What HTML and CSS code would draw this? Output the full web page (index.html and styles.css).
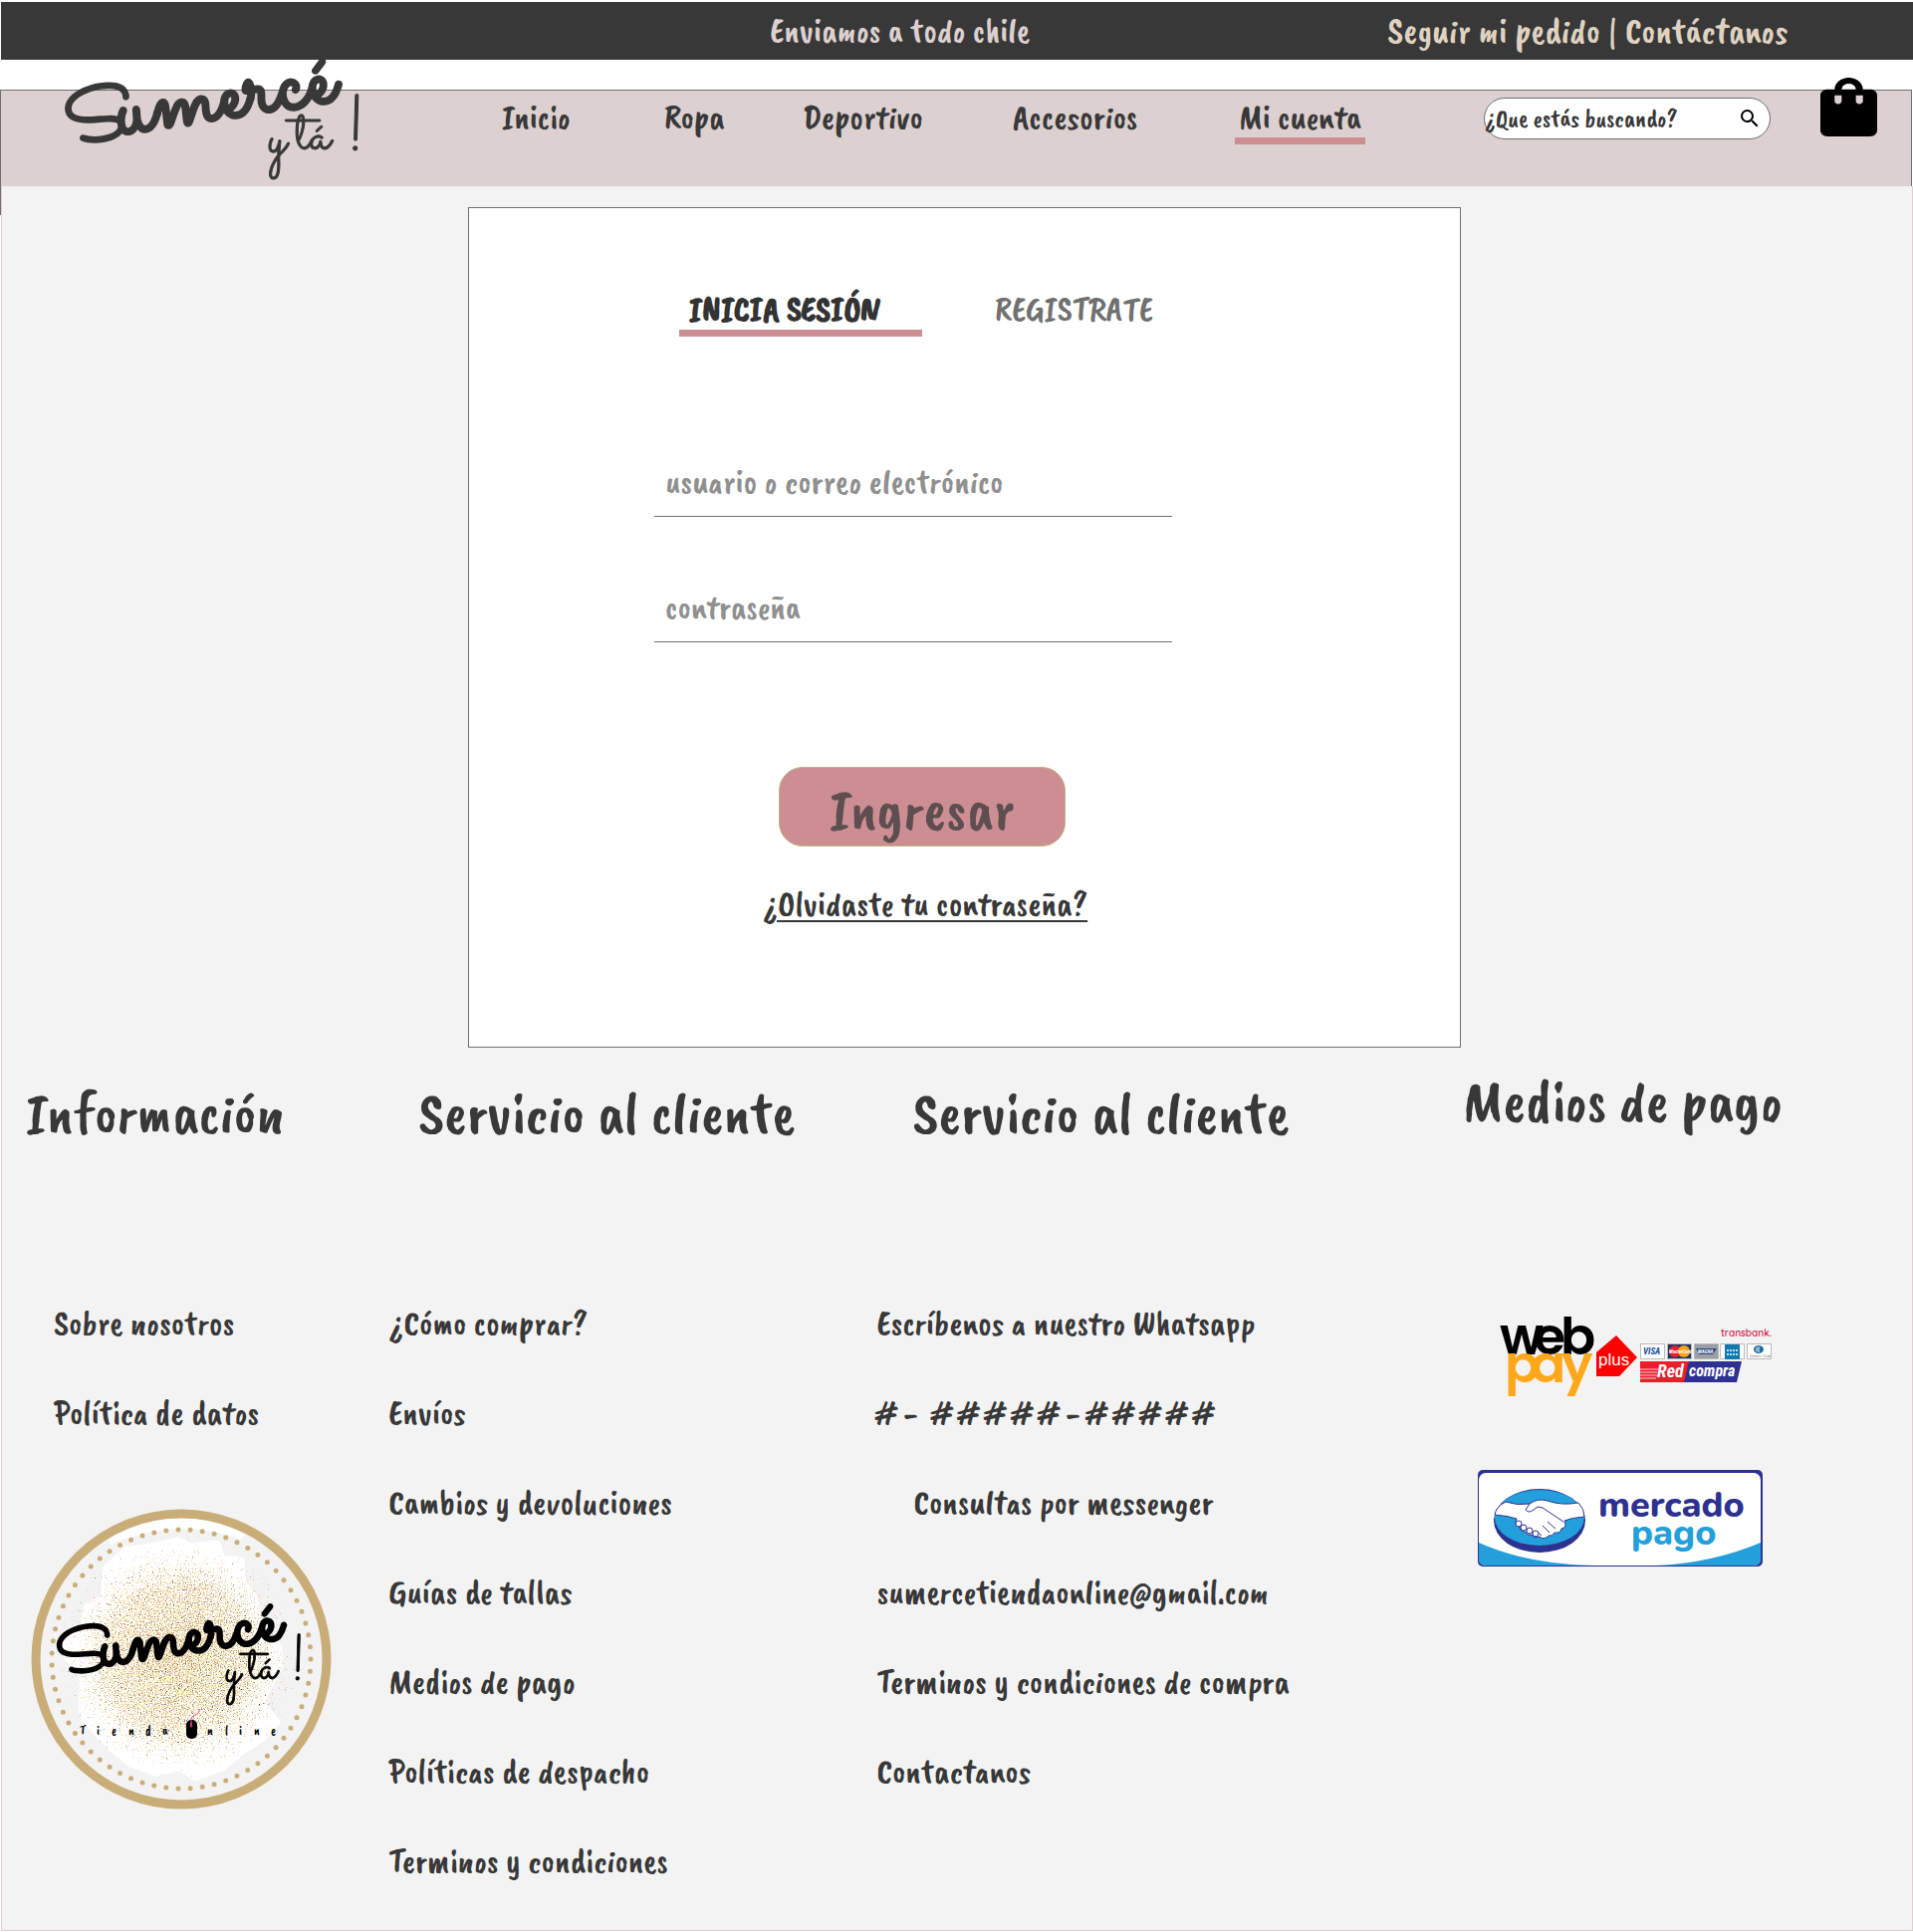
FILE: index.html
```html
<!DOCTYPE html>
<html lang="es">
<head>
<meta charset="utf-8">
<meta name="viewport" content="width=device-width, initial-scale=1">
<title>Sumercé y tá – Mi cuenta</title>
<link rel="stylesheet" href="styles.css">
</head>
<body>
<svg class="defs" aria-hidden="true">
  <symbol id="wordmark" viewBox="0 0 300 124">
    <g transform="rotate(-9 6 84)">
      <text class="script script-bold" x="6" y="84" font-size="74">S</text>
      <text class="script script-bold" x="58" y="82" font-size="106">umercé</text>
    </g>
    <text class="script" x="206" y="92" font-size="60">y</text>
    <text class="script" x="234" y="88" font-size="60">tá</text>
    <text class="script" x="284" y="89" font-size="78">!</text>
  </symbol>
</svg>

<div class="topbar">
  <p class="topbar-note">Enviamos a todo chile</p>
  <p class="topbar-links"><a href="#pedido">Seguir mi pedido</a> | <a href="#contacto">Contáctanos</a></p>
</div>

<header class="header">
  <a class="brand" href="#inicio" aria-label="Sumercé y tá"><svg width="300" height="124"><use href="#wordmark" width="300" height="124"/></svg></a>
  <nav class="nav">
    <a href="#inicio">Inicio</a>
    <a href="#ropa">Ropa</a>
    <a href="#deportivo">Deportivo</a>
    <a href="#accesorios">Accesorios</a>
    <a class="active" href="#cuenta">Mi cuenta</a>
  </nav>
  <form class="search">
    <input type="search" placeholder="¿Que estás buscando?" aria-label="Buscar">
    <button type="button" aria-label="Buscar"><svg width="24" height="24" viewBox="0 0 24 24"><path d="M15.5 14h-.79l-.28-.27A6.47 6.47 0 0 0 16 9.500 6.500 6.500 0 1 0 9.500 16c1.610 0 3.090-.59 4.230-1.570l.27.28v.79l5 4.990L20.490 19l-4.990-5zm-6 0C7.010 14 5 11.990 5 9.500S7.010 5 9.500 5 14 7.010 14 9.500 11.990 14 9.500 14z"/></svg></button>
  </form>
  <a class="bag" href="#bolsa" aria-label="Bolsa de compras"><svg width="57" height="59" viewBox="4 2 16 20" preserveAspectRatio="none"><path d="M18 6h-2c0-2.210-1.790-4-4-4S8 3.790 8 6H6c-1.100 0-2 .9-2 2v12c0 1.100.9 2 2 2h12c1.100 0 2-.9 2-2V8c0-1.100-.9-2-2-2zm-8 4c0 .55-.45 1-1 1s-1-.45-1-1V8h2v2zm2-6c1.100 0 2 .9 2 2h-4c0-1.100.9-2 2-2zm4 6c0 .55-.45 1-1 1s-1-.45-1-1V8h2v2z"/></svg></a>
</header>

<div class="page">
  <main class="panel">
    <div class="tabs">
      <a class="tab current" href="#sesion">INICIA SESIÓN</a>
      <a class="tab" href="#registro">REGISTRATE</a>
    </div>
    <form class="login">
      <input type="text" placeholder="usuario o correo electrónico" aria-label="Usuario o correo electrónico">
      <input type="password" placeholder="contraseña" aria-label="Contraseña">
      <button class="submit" type="button">Ingresar</button>
      <a class="forgot" href="#recuperar">¿Olvidaste tu contraseña?</a>
    </form>
  </main>

  <footer class="footer">
    <section class="info">
      <h2>Información</h2>
      <ul>
        <li><a href="#nosotros">Sobre nosotros</a></li>
        <li><a href="#datos">Política de datos</a></li>
      </ul>
      <svg class="badge" width="302" height="304" viewBox="0 0 302 304" role="img" aria-label="Sumercé y tá, tienda online">
        <defs>
          <radialGradient id="density">
            <stop offset="0" stop-opacity=".63"/>
            <stop offset=".6" stop-opacity=".54"/>
            <stop offset="1" stop-opacity=".25"/>
          </radialGradient>
          <filter id="glitter" color-interpolation-filters="sRGB">
            <feTurbulence type="fractalNoise" baseFrequency=".85" numOctaves="2" seed="4" result="noise"/>
            <feColorMatrix in="noise" values="0 0 0 0 0  0 0 0 0 0  0 0 0 0 0  1 0 0 0 0" result="grain"/>
            <feComposite in="grain" in2="SourceAlpha" operator="arithmetic" k2="1" k3="1" k4="-1"/>
            <feColorMatrix values="0 0 0 0 0  0 0 0 0 0  0 0 0 0 0  0 0 0 5 0" result="specks"/>
            <feColorMatrix in="noise" values="0 1.500 0 0 .14  0 1.400 0 0 .06  0 1 .6 0 -.28  0 0 0 0 1"/>
            <feComposite in2="specks" operator="in"/>
          </filter>
        </defs>
        <path d="M79 34Q151-10 211 28L210 29Q151 6 79 34z" fill="#fff" stroke="#fff" stroke-width="5"/>
        <path d="M148 32l12 6 28-3 4 15 20 2 2 23 12 17 2 18 22 30v20l-18 35 16 20-15 17-20 13-20 17-28 10-15-10-25 5-25-9-22-18-23-25-5-10 2-35-17-20-1-20 18-5 3-25 17-10 3-30 20-18 25-4 20-4z" fill="#fff" stroke="#fff" stroke-width="5" stroke-linejoin="round"/>
        <circle cx="148" cy="150" r="124" fill="url(#density)" filter="url(#glitter)"/>
        <circle cx="151" cy="152" r="146" fill="none" stroke="#c9ad78" stroke-width="9"/>
        <circle cx="151" cy="152" r="130" fill="none" stroke="#c9ad78" stroke-width="5" stroke-linecap="round" pathLength="67" stroke-dasharray="0 1"/>
        <use href="#wordmark" x="24" y="98" width="249" height="103"/>
        <text class="tagline" y="228" x="49 66 81 98 115 132">Tienda</text>
        <text class="tagline" y="228" x="177 195 209 224 241">nline</text>
        <rect x="156" y="213" width="11" height="19" rx="5" fill="#000"/>
        <path d="M161 220v-7q0-4 4-5t5-6" fill="none" stroke="#e85aa8" stroke-width="1"/>
        <ellipse cx="161" cy="218" rx="1" ry="3" fill="#c0407f"/>
      </svg>
    </section>
    <section class="service">
      <h2>Servicio al cliente</h2>
      <ul>
        <li><a href="#comprar">¿Cómo comprar?</a></li>
        <li><a href="#envios">Envíos</a></li>
        <li><a href="#cambios">Cambios y devoluciones</a></li>
        <li><a href="#tallas">Guías de tallas</a></li>
        <li><a href="#pago">Medios de pago</a></li>
        <li><a href="#despacho">Políticas de despacho</a></li>
        <li><a href="#terminos">Terminos y condiciones</a></li>
      </ul>
    </section>
    <section class="contact">
      <h2>Servicio al cliente</h2>
      <ul>
        <li><a href="#whatsapp">Escríbenos a nuestro Whatsapp</a></li>
        <li># - &nbsp;# # # # # - # # # # #</li>
        <li class="indent"><a href="#messenger">Consultas por messenger</a></li>
        <li><a href="#correo">sumercetiendaonline@gmail.com</a></li>
        <li><a href="#condiciones">Terminos y condiciones de compra</a></li>
        <li><a href="#contactanos">Contactanos</a></li>
      </ul>
    </section>
    <section class="payments">
      <h2>Medios de pago</h2>
      <svg class="webpay" width="274" height="80" viewBox="0 0 274 80" role="img" aria-label="Webpay plus, Transbank, Redcompra">
        <g class="webpay-name">
          <text x="0 34 61" y="39">web</text>
          <text class="orange" x="5 31 62" y="67">pay</text>
        </g>
        <path d="M97 37l20-17 21 22-18 19H97z" fill="#fe0000"/>
        <text class="plain" x="99" y="50" font-size="17" fill="#fff">plus</text>
        <text class="transbank" x="222" y="21">transbank.</text>
        <g stroke="#bbb" stroke-width="1">
          <path d="M141.500 28.500h24v15h-24z" fill="#fff"/>
          <path d="M168.500 28.500h24v15h-24z" fill="#1c3566"/>
          <path d="M195.500 28.500h24v15h-24z" fill="#9a9ea6"/>
          <path d="M221.500 28.500h24v15h-24z" fill="#fff"/>
          <path d="M248.500 28.500h24v15h-24z" fill="#fff"/>
        </g>
        <text class="card" x="144" y="39" font-size="9" fill="#14509a">VISA</text>
        <circle cx="176" cy="36" r="6" fill="#e5202b"/><circle cx="185" cy="36" r="6" fill="#f9a11b"/>
        <text class="card" x="170" y="38" font-size="5" fill="#fff">MasterCard</text>
        <path d="M197 33h21l-4 6h-14z" fill="#314c7c"/>
        <text class="card" x="199" y="38" font-size="5" fill="#fff">MAGNA</text>
        <path d="M226 29h15v15h-15z" fill="#1079ad"/>
        <path d="M228 35h12M228 39h12" stroke="#bfe0ee" stroke-width="2" stroke-dasharray="2 1"/>
        <ellipse cx="260" cy="34" rx="5" ry="4" fill="#1d6fa8"/><path d="M260 31v6M258 32v4" stroke="#fff"/>
        <text class="plain" x="251" y="42" font-size="4" fill="#777">Diners Club</text>
        <path d="M141 46h50l-5 21h-45z" fill="#ec1c29"/>
        <path d="M190 46h53l-5 21h-53z" fill="#2d3190"/>
        <path d="M141 54h18M141 57h17M141 60h17M141 63h16" stroke="#fff" stroke-opacity=".8"/>
        <text class="card" x="158" y="62" font-size="18" fill="#fff">Red</text>
        <text class="card" x="190" y="61" font-size="16" fill="#fff">compra</text>
      </svg>
      <svg class="mercado" width="286" height="97" viewBox="0 0 286 97" role="img" aria-label="Mercado pago">
        <rect width="286" height="97" rx="5" fill="#2d3190"/>
        <rect x="1" y="3" width="283" height="93" rx="7" fill="#fff"/>
        <path d="M1 73Q50 95 118 96H8q-7 0-7-7zM284 73Q234 94 178 96h99q7 0 7-7z" fill="#239fdb"/>
        <ellipse cx="62" cy="51" rx="46" ry="32" fill="#2d3190"/>
        <ellipse cx="62" cy="48" rx="45" ry="28" fill="#239fdb"/>
        <g fill="#fff" stroke="#2d3190" stroke-width="1" stroke-linejoin="round">
          <path d="M28 32Q39 36 52 34q8-6 18-3 14 5 31 2 6 6 6 14-13 1-20 4 3 7-3 8-1 5-7 4-2 4-6 3-4 5-9 1-6 2-8-2-5 1-6-3-6 0-6-5-6-3-3-8Q30 46 17 45 18 37 28 32z"/>
          <path d="M52 34l-4 6q3 4 8 0l4-3 5 1 21 14M78 59l-8-7M72 63l-7-7M64 66l-5-5" fill="none"/>
          <circle cx="41" cy="54" r="3"/><circle cx="46" cy="58" r="3"/><circle cx="52" cy="61" r="3"/><circle cx="58" cy="64" r="3"/>
        </g>
        <text class="mercado-name" x="121" y="47" fill="#2d3190">mercado</text>
        <text class="mercado-name" x="154" y="75" fill="#239fdb">pago</text>
      </svg>
    </section>
  </footer>
</div>
</body>
</html>
```
FILE: styles.css
```css
* { box-sizing: border-box; }

body {
  margin: 0;
  padding-top: 2px;
  background: #fff;
  color: #383838;
  font-family: "Caveat Brush", "Open Sans", sans-serif;
  font-size: 35px;
  line-height: 40px;
}

a { color: inherit; text-decoration: none; }
p, h2, ul { margin: 0; padding: 0; font-weight: 400; }
ul { list-style: none; }
svg { display: block; overflow: visible; }
symbol { overflow: visible; }
input, button { font: inherit; color: inherit; border: 0; background: none; padding: 0; }
input { min-width: 0; outline: 0; }
input::placeholder { color: inherit; opacity: 1; }
.defs { position: absolute; width: 0; height: 0; }

/* Top bar */
.topbar {
  display: grid;
  grid-template-columns: 619fr 527fr;
  align-items: center;
  height: 58px;
  margin-left: 1px;
  padding-left: 40.2%;
  background: #383838;
  white-space: nowrap;
}
.topbar-note { color: #dcd0d0; }
.topbar-links { color: #dfd2c0; font-size: 37px; }

/* Header */
.header {
  position: relative;
  display: grid;
  grid-template-columns: 503fr 986fr 288fr 141fr;
  align-items: start;
  height: 97px;
  margin: 30px 1px 0 0;
  border: 1px solid #707070;
  border-bottom: 0;
  background: #dcd0d0;
}
.header::after {
  content: "";
  position: absolute;
  left: -1px;
  top: 0;
  width: 1px;
  height: 125px;
  background: #707070;
}
.brand { margin: -30px 0 0 62px; fill: #383838; }
.nav {
  display: grid;
  grid-template-columns: 163fr 139fr 211fr 223fr 250fr;
  justify-items: start;
  padding-top: 7px;
  white-space: nowrap;
}
.nav .active { padding: 0 4px; border-bottom: 7px solid #cc8e93; }
.search {
  display: flex;
  align-items: center;
  height: 42px;
  margin-top: 7px;
  border: 1px solid #707070;
  border-radius: 21px;
  background: #fff;
  font-size: 25px;
}
.search input { flex: 1; height: 40px; }
.search button { margin-right: 8px; }
.bag { justify-self: start; margin: -13px 0 0 50px; }

/* Page */
.page {
  display: flow-root;
  margin-left: 1px;
  padding-bottom: 49px;
  border: 1px solid #dcd0d0;
  border-top: 0;
  background: #f3f3f3;
}

/* Login panel */
.panel {
  width: 52%;
  margin: 21px 0 0 24.4%;
  padding: 82px 0 123px 186px;
  border: 1px solid #707070;
  background: #fff;
}
.tabs { display: flex; gap: 73px; padding-left: 25px; color: #707070; }
.tab.current {
  width: 244px;
  padding-left: 10px;
  border-bottom: 7px solid #cc8e93;
  color: #333;
  font-weight: 700;
}
.login {
  display: flex;
  flex-direction: column;
  align-items: flex-start;
  padding-top: 125px;
}
.login input {
  width: 520px;
  height: 56px;
  margin-bottom: 70px;
  padding: 0 0 14px 11px;
  border-bottom: 1px solid #707070;
  color: #909090;
}
.submit {
  width: 288px;
  height: 80px;
  margin: 55px 0 38px 125px;
  padding-top: 4px;
  border: 1px solid #c2b280;
  border-radius: 24px;
  background: #cc8e93;
  color: #5f4e50;
  font-size: 60px;
}
.forgot {
  margin-left: 109px;
  text-decoration: underline;
  text-decoration-thickness: 2px;
  text-underline-offset: 5px;
}

/* Footer */
.footer {
  display: grid;
  grid-template-columns: 388fr 490fr 588fr 451fr;
  align-items: start;
  padding-top: 29px;
  white-space: nowrap;
}
.footer h2 { margin-bottom: 156px; font-size: 60px; line-height: 72px; }
.footer ul { display: grid; gap: 50px; }
.info { padding-left: 24px; }
.info ul { padding-left: 28px; }
.service h2 { padding-left: 30px; }
.contact h2 { padding-left: 36px; }
.indent { padding-left: 37px; }
.badge { margin: 75px 0 0 5px; }
.payments { margin-top: -12px; }
.payments h2 { margin-bottom: 180px; }
.webpay { margin: 0 0 75px 37px; }
.mercado { margin-left: 15px; }

/* Logos */
.script { font-family: "Sacramento", "Lato", cursive; stroke: currentColor; stroke-width: 1px; }
.script-bold { stroke-width: 4px; stroke-linejoin: round; }
.badge { color: #000; fill: #000; }
.tagline { font-size: 13px; }
.webpay-name { font: 600 52px "Poppins", "Lato", sans-serif; }
.webpay-name .orange { fill: #ffa71a; }
.plain { font-family: "Liberation Sans", sans-serif; }
.transbank { font: 600 10px "Quicksand", "Lato", sans-serif; fill: #d8194d; }
.card { font-family: "Roboto Condensed", "Liberation Sans", sans-serif; font-weight: 700; font-style: italic; }
.mercado-name { font: 800 36px "Nunito", "Lato", sans-serif; }
```
